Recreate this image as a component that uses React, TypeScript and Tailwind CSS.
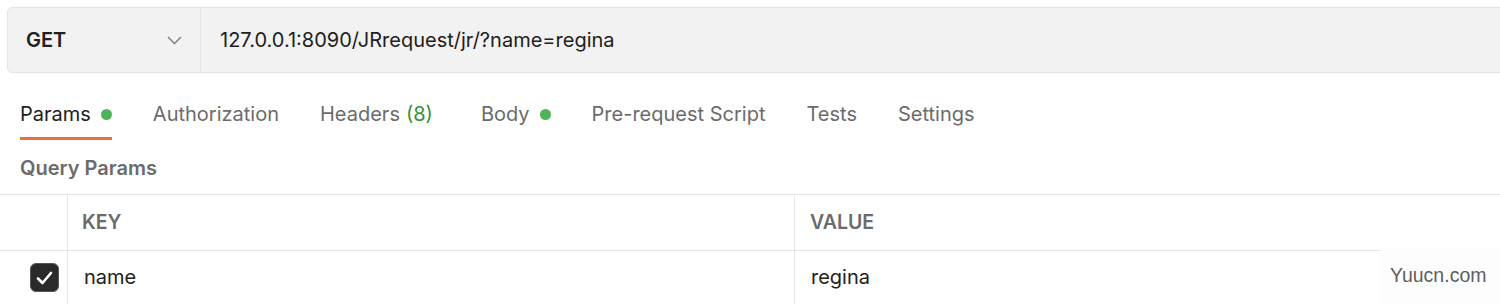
import React from "react";

const font = { fontFamily: "Inter, 'Noto Sans', sans-serif" };

function Tab({ label, active, dot, count, extra }: { label: string; active?: boolean; dot?: boolean; count?: string; extra?: boolean }) {
  return (
    <div className={`relative flex items-center h-full ${extra ? "ml-[7px]" : ""}`}>
      <span className={`text-[20px] ${active ? "text-[#212121]" : "text-[#6b6b6b]"}`}>{label}</span>
      {count && <span className="text-[20px] text-[#3a8f3a] ml-[6px]">{count}</span>}
      {dot && <span className="ml-[10px] w-[11px] h-[11px] rounded-full bg-[#4fb359]" />}
      {active && <span className="absolute left-0 right-0 bottom-[-1px] h-[3px] bg-[#f26b3a]" />}
    </div>
  );
}

export default function App() {
  return (
    <div className="relative w-[1500px] h-[304px] bg-white overflow-hidden" style={font}>
      <div className="pt-[7px] pl-[7px]">
        <div className="flex h-[66px] w-[1510px] bg-[#f2f2f2] border border-[#e4e4e4] rounded-[5px]">
          <div className="flex items-center justify-between w-[193px] pl-[18px] pr-[18px] border-r border-[#e4e4e4]">
            <span className="text-[20px] font-semibold text-[#212121]">GET</span>
            <svg width="15" height="9" viewBox="0 0 15 9" fill="none">
              <path d="M1 1l6.5 6.5L14 1" stroke="#7a7a7a" strokeWidth="1.3" />
            </svg>
          </div>
          <div className="flex items-center pl-[19px] text-[20px] text-[#212121]">127.0.0.1:8090/JRrequest/jr/?name=regina</div>
        </div>
      </div>
      <div className="flex h-[50px] mt-[16px] pl-[20px] gap-[41px]">
        <Tab label="Params" active dot />
        <Tab label="Authorization" />
        <Tab label="Headers" count="(8)" />
        <Tab label="Body" dot extra />
        <Tab label="Pre-request Script" />
        <Tab label="Tests" />
        <Tab label="Settings" />
      </div>
      <div className="flex items-center h-[55px] pt-[3px] pl-[20px] text-[20px] font-semibold text-[#6b6b6b]">Query Params</div>
      <div className="border-t border-[#e6e6e6]">
        <div className="grid grid-cols-[68px_727px_1fr] h-[56px] border-b border-[#e6e6e6]">
          <div className="border-r border-[#e6e6e6]" />
          <div className="flex items-center pl-[14px] border-r border-[#e6e6e6] text-[19.5px] font-semibold text-[#6b6b6b]">KEY</div>
          <div className="flex items-center pl-[15px] text-[19.5px] font-semibold text-[#6b6b6b]">VALUE</div>
        </div>
        <div className="grid grid-cols-[68px_727px_1fr] h-[60px]">
          <div className="flex items-start justify-end pr-[8px] pt-[12px] border-r border-[#e6e6e6]">
            <div className="flex items-center justify-center w-[29px] h-[29px] rounded-[6px] bg-[#2a2a2a] border border-[#555]">
              <svg width="17" height="14" viewBox="0 0 17 14" fill="none">
                <path d="M2 7.5l4.5 4.5L15 2" stroke="white" strokeWidth="2.6" strokeLinecap="round" strokeLinejoin="round" />
              </svg>
            </div>
          </div>
          <div className="flex items-start pt-[11px] pl-[16px] border-r border-[#e6e6e6] text-[20px] text-[#212121]">name</div>
          <div className="flex items-start pt-[11px] pl-[16px] text-[20px] text-[#212121]">regina</div>
        </div>
      </div>
      <div
        className="absolute left-[1380px] top-[248px] w-[120px] h-[56px] bg-[#fdfdfd] flex items-start pt-[13px] pl-[10px] text-[19.5px] text-[#5e5e5e]"
        style={{ fontFamily: "'Liberation Sans', Arial, sans-serif" }}
      >
        Yuucn.com
      </div>
    </div>
  );
}
